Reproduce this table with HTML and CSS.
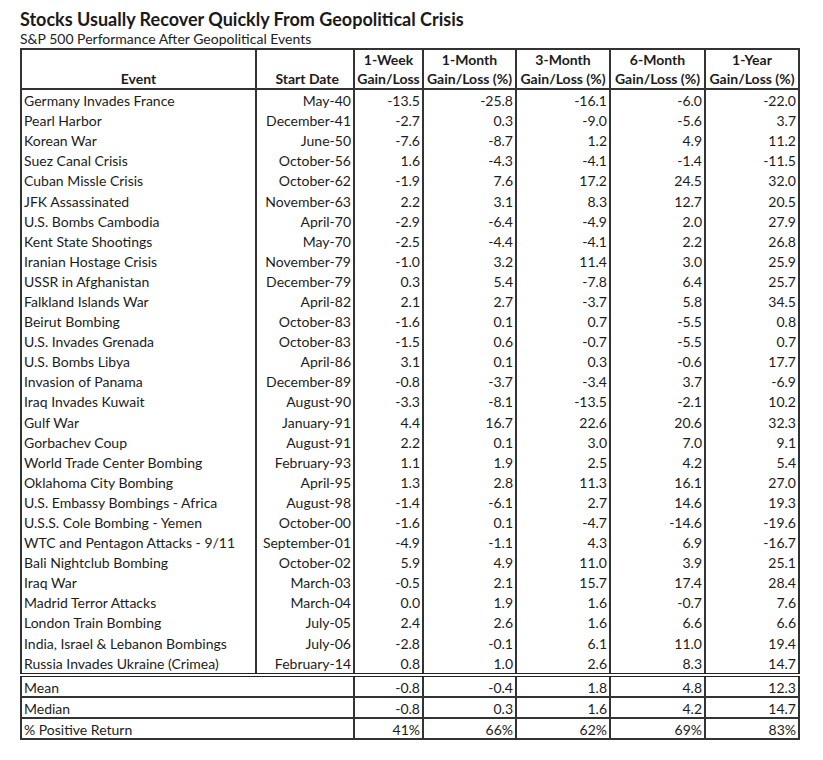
FILE: index.html
```html
<!DOCTYPE html>
<html>
<head>
<meta charset="utf-8">
<link rel="stylesheet" href="styles.css">
</head>
<body>
<div class="page">
  <h1 class="title">Stocks Usually Recover Quickly From Geopolitical Crisis</h1>
  <div class="subtitle">S&amp;P 500 Performance After Geopolitical Events</div>
  <table class="tbl">
    <colgroup>
      <col class="c-event"><col class="c-date"><col class="c-w"><col class="c-m"><col class="c-m3"><col class="c-m6"><col class="c-y">
    </colgroup>
    <thead>
      <tr>
        <th class="h-event">Event</th>
        <th class="h-date">Start Date</th>
        <th>1-Week<br>Gain/Loss</th>
        <th>1-Month<br>Gain/Loss (%)</th>
        <th>3-Month<br>Gain/Loss (%)</th>
        <th>6-Month<br>Gain/Loss (%)</th>
        <th>1-Year<br>Gain/Loss (%)</th>
      </tr>
    </thead>
    <tbody class="data">
      <tr><td>Germany Invades France</td><td>May-40</td><td>-13.5</td><td>-25.8</td><td>-16.1</td><td>-6.0</td><td>-22.0</td></tr>
      <tr><td>Pearl Harbor</td><td>December-41</td><td>-2.7</td><td>0.3</td><td>-9.0</td><td>-5.6</td><td>3.7</td></tr>
      <tr><td>Korean War</td><td>June-50</td><td>-7.6</td><td>-8.7</td><td>1.2</td><td>4.9</td><td>11.2</td></tr>
      <tr><td>Suez Canal Crisis</td><td>October-56</td><td>1.6</td><td>-4.3</td><td>-4.1</td><td>-1.4</td><td>-11.5</td></tr>
      <tr><td>Cuban Missle Crisis</td><td>October-62</td><td>-1.9</td><td>7.6</td><td>17.2</td><td>24.5</td><td>32.0</td></tr>
      <tr><td>JFK Assassinated</td><td>November-63</td><td>2.2</td><td>3.1</td><td>8.3</td><td>12.7</td><td>20.5</td></tr>
      <tr><td>U.S. Bombs Cambodia</td><td>April-70</td><td>-2.9</td><td>-6.4</td><td>-4.9</td><td>2.0</td><td>27.9</td></tr>
      <tr><td>Kent State Shootings</td><td>May-70</td><td>-2.5</td><td>-4.4</td><td>-4.1</td><td>2.2</td><td>26.8</td></tr>
      <tr><td>Iranian Hostage Crisis</td><td>November-79</td><td>-1.0</td><td>3.2</td><td>11.4</td><td>3.0</td><td>25.9</td></tr>
      <tr><td>USSR in Afghanistan</td><td>December-79</td><td>0.3</td><td>5.4</td><td>-7.8</td><td>6.4</td><td>25.7</td></tr>
      <tr><td>Falkland Islands War</td><td>April-82</td><td>2.1</td><td>2.7</td><td>-3.7</td><td>5.8</td><td>34.5</td></tr>
      <tr><td>Beirut Bombing</td><td>October-83</td><td>-1.6</td><td>0.1</td><td>0.7</td><td>-5.5</td><td>0.8</td></tr>
      <tr><td>U.S. Invades Grenada</td><td>October-83</td><td>-1.5</td><td>0.6</td><td>-0.7</td><td>-5.5</td><td>0.7</td></tr>
      <tr><td>U.S. Bombs Libya</td><td>April-86</td><td>3.1</td><td>0.1</td><td>0.3</td><td>-0.6</td><td>17.7</td></tr>
      <tr><td>Invasion of Panama</td><td>December-89</td><td>-0.8</td><td>-3.7</td><td>-3.4</td><td>3.7</td><td>-6.9</td></tr>
      <tr><td>Iraq Invades Kuwait</td><td>August-90</td><td>-3.3</td><td>-8.1</td><td>-13.5</td><td>-2.1</td><td>10.2</td></tr>
      <tr><td>Gulf War</td><td>January-91</td><td>4.4</td><td>16.7</td><td>22.6</td><td>20.6</td><td>32.3</td></tr>
      <tr><td>Gorbachev Coup</td><td>August-91</td><td>2.2</td><td>0.1</td><td>3.0</td><td>7.0</td><td>9.1</td></tr>
      <tr><td>World Trade Center Bombing</td><td>February-93</td><td>1.1</td><td>1.9</td><td>2.5</td><td>4.2</td><td>5.4</td></tr>
      <tr><td>Oklahoma City Bombing</td><td>April-95</td><td>1.3</td><td>2.8</td><td>11.3</td><td>16.1</td><td>27.0</td></tr>
      <tr><td>U.S. Embassy Bombings - Africa</td><td>August-98</td><td>-1.4</td><td>-6.1</td><td>2.7</td><td>14.6</td><td>19.3</td></tr>
      <tr><td>U.S.S. Cole Bombing - Yemen</td><td>October-00</td><td>-1.6</td><td>0.1</td><td>-4.7</td><td>-14.6</td><td>-19.6</td></tr>
      <tr><td>WTC and Pentagon Attacks - 9/11</td><td>September-01</td><td>-4.9</td><td>-1.1</td><td>4.3</td><td>6.9</td><td>-16.7</td></tr>
      <tr><td>Bali Nightclub Bombing</td><td>October-02</td><td>5.9</td><td>4.9</td><td>11.0</td><td>3.9</td><td>25.1</td></tr>
      <tr><td>Iraq War</td><td>March-03</td><td>-0.5</td><td>2.1</td><td>15.7</td><td>17.4</td><td>28.4</td></tr>
      <tr><td>Madrid Terror Attacks</td><td>March-04</td><td>0.0</td><td>1.9</td><td>1.6</td><td>-0.7</td><td>7.6</td></tr>
      <tr><td>London Train Bombing</td><td>July-05</td><td>2.4</td><td>2.6</td><td>1.6</td><td>6.6</td><td>6.6</td></tr>
      <tr><td>India, Israel &amp; Lebanon Bombings</td><td>July-06</td><td>-2.8</td><td>-0.1</td><td>6.1</td><td>11.0</td><td>19.4</td></tr>
      <tr><td>Russia Invades Ukraine (Crimea)</td><td>February-14</td><td>0.8</td><td>1.0</td><td>2.6</td><td>8.3</td><td>14.7</td></tr>
    </tbody>
    <tbody class="summary">
      <tr class="first"><td colspan="2">Mean</td><td>-0.8</td><td>-0.4</td><td>1.8</td><td>4.8</td><td>12.3</td></tr>
      <tr><td colspan="2">Median</td><td>-0.8</td><td>0.3</td><td>1.6</td><td>4.2</td><td>14.7</td></tr>
      <tr><td colspan="2">% Positive Return</td><td>41%</td><td>66%</td><td>62%</td><td>69%</td><td>83%</td></tr>
    </tbody>
  </table>
</div>
</body>
</html>
```
FILE: styles.css
```css
html, body {
  margin: 0;
  padding: 0;
  background: #ffffff;
}
.page {
  padding: 8px 0 0 20px;
  font-family: Lato, "Open Sans", sans-serif;
  color: #1c1c1c;
}
.title {
  margin: 0;
  font-size: 18px;
  font-weight: 700;
  line-height: 22px;
  color: #1a1a1a;
}
.subtitle {
  font-size: 14px;
  line-height: 18px;
  margin-top: 0;
  color: #222;
}
.tbl {
  border-collapse: collapse;
  table-layout: fixed;
  width: 779px;
  border: 2px solid #333;
  font-size: 14px;
}
.c-event { width: 235px; }
.c-date { width: 98px; }
.c-w { width: 69px; }
.c-m { width: 93px; }
.c-m3 { width: 94px; }
.c-m6 { width: 95px; }
.c-y { width: 94px; }
.tbl th {
  font-weight: 700;
  text-align: center;
  vertical-align: bottom;
  line-height: 19px;
  padding: 0;
  border-left: 2px solid #333;
  border-bottom: 2px solid #333;
  white-space: nowrap;
}
.tbl th.h-date {
  text-align: right;
  padding-right: 14px;
}
.tbl td {
  height: 19.1px;
  padding: 1px 2px 0 2px;
  line-height: 19px;
  text-align: right;
  white-space: nowrap;
  border-left: 2px solid #333;
}
.tbl td:first-child {
  text-align: left;
}
.summary td {
  border-top: 2px solid #333;
  height: 17px;
  padding-top: 2px;
  line-height: 17px;
}
.summary tr.first td {
  border-top: 4px double #222;
}
```
